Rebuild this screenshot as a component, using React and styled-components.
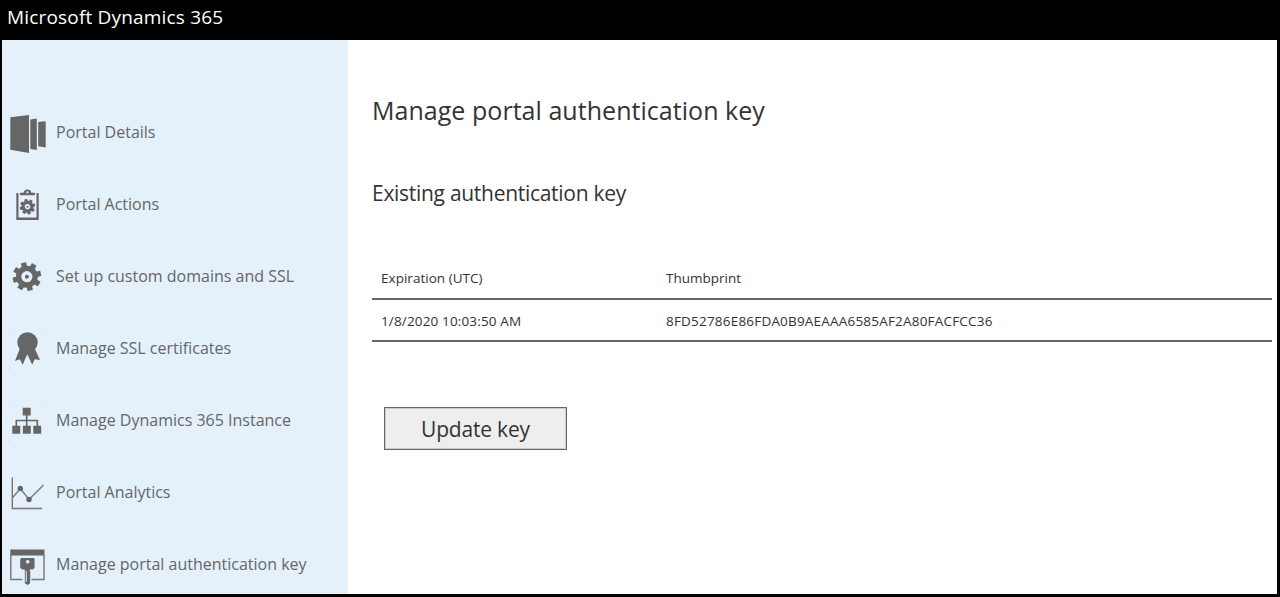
import React from "react";
import styled, { createGlobalStyle } from "styled-components";

const GlobalStyle = createGlobalStyle`
  *, *::before, *::after { box-sizing: border-box; }
  body {
    margin: 0;
    background: #fff;
    font-family: "Segoe UI", "Open Sans", "Noto Sans", sans-serif;
  }
`;

const Frame = styled.div`
  display: flex;
  flex-direction: column;
  height: 597px;
  overflow: hidden;
  background: #fff;
  border: solid #000;
  border-width: 0 3px 3px 2px;
`;

const TopBar = styled.header`
  flex: none;
  height: 40px;
  padding-left: 5px;
  background: #000;
  color: #fff;
  font-size: 19px;
  line-height: 35px;
  white-space: nowrap;
  letter-spacing: 0.18px;
`;

const Body = styled.div`
  display: flex;
  flex: 1;
  min-height: 0;
`;

const Sidebar = styled.nav`
  flex: none;
  width: 346px;
  padding-top: 56px;
  background: #e4f1fb;
  overflow: hidden;
`;

const NavItem = styled.a`
  display: flex;
  align-items: center;
  height: 72px;
  padding-left: 5px;
  color: #666;
  font-size: 16px;
  white-space: nowrap;
`;

const NavIcon = styled.svg`
  flex: none;
  width: 40px;
  height: 48px;
  margin-right: 9px;
  fill: #666;
`;

const Main = styled.main`
  flex: 1;
  padding: 49px 5px 0 24px;
  color: #333;
`;

const Title = styled.h1`
  margin: 0;
  font-size: 25px;
  font-weight: 400;
  line-height: 42px;
  letter-spacing: 0.04px;
`;

const Subtitle = styled.h2`
  margin: 42px 0 0;
  font-size: 21px;
  font-weight: 400;
  line-height: 40px;
  letter-spacing: -0.29px;
`;

const Table = styled.div`
  margin-top: 43px;
  font-size: 13.5px;
`;

const Row = styled.div`
  display: grid;
  grid-template-columns: 285px 1fr;
  align-items: center;
  height: ${(p) => p.$height}px;
  padding-top: 2px;
  border-bottom: 2px solid #666;
`;

const Cell = styled.span`
  padding-left: 9px;
  letter-spacing: ${(p) => p.$track || 0}px;
`;

const UpdateButton = styled.button`
  display: block;
  width: 183px;
  height: 43px;
  margin: 65px 0 0 12px;
  padding: 1px 0 0;
  border: 1px solid #666;
  background: #eee;
  box-shadow: inset 0 0 0 1px #ccc;
  color: #333;
  font-family: inherit;
  font-size: 21px;
  letter-spacing: -0.2px;
`;

const Gear = ({ cx, cy, outer, body, hole, tooth, dot, turn = 0 }) => (
  <g transform={`rotate(${turn} ${cx} ${cy})`}>
    {[0, 45, 90, 135, 180, 225, 270, 315].map((a) => (
      <rect
        key={a}
        x={cx - tooth / 2}
        y={cy - outer}
        width={tooth}
        height={outer - body + 1.5}
        rx="0.5"
        transform={`rotate(${a} ${cx} ${cy})`}
      />
    ))}
    <circle cx={cx} cy={cy} r={(body + hole) / 2} fill="none" stroke="#666" strokeWidth={body - hole} />
    {dot && <circle cx={cx} cy={cy} r={dot} />}
  </g>
);

const Corners = () => (
  <path d="M8 9h1v1H8zM46 9h1v1h-1zM8 47h1v1H8zM46 47h1v1h-1z" fill="#ccd6df" />
);

const icons = {
  details: <path d="M10.300 12.200 29 10v38l-18.700-3.200zM30.300 14.400l6.500-1v31.700l-6.500-1zM38.200 17l7.500-.7v26.200l-7.500-1.300z" />,
  actions: (
    <>
      <path d="M16.300 16h2.200v24.500h18V16h2.200v27H16.300z" />
      <path d="M20 15.700h3.600c.3-1.700 1.400-3.200 3.900-3.200s3.600 1.500 3.900 3.200H35v2.600H20z" />
      <circle cx="27.500" cy="15.300" r="1.100" fill="#e4f1fb" />
      <Gear cx={27.500} cy={29.700} outer={7.700} body={6} hole={2.700} tooth={3.200} dot={1} turn={-14} />
    </>
  ),
  settings: <Gear cx={26.900} cy={27.700} outer={14.300} body={11} hole={5.600} tooth={5.400} dot={2} turn={-14} />,
  certificate: (
    <>
      <Corners />
      <circle cx="27.500" cy="21.500" r="10.200" />
      <path d="M20 27 15 40l4.700-1.800 3 5.600 4.500-10.500 5 10.500 2.500-5.600 5.300.8L34.500 27z" />
    </>
  ),
  instance: (
    <>
      <Corners />
      <path d="M22.700 14.700h8v7.700h-8zM12.300 32.700h7.900v8h-7.900zM22.900 32.700h7.900v8h-7.900zM33.300 32.700h7.900v8h-7.900z" />
      <path d="M26.700 22v11M16.300 33v-5.500h21V33" fill="none" stroke="#666" strokeWidth="1.600" />
    </>
  ),
  analytics: (
    <>
      <path d="M12.300 12.500v31h30M12.300 33l8-9.500 8.700 11 14.500-14.500" fill="none" stroke="#777" strokeWidth="1.400" />
      <circle cx="20.300" cy="23.500" r="2.700" />
      <circle cx="29" cy="34.500" r="2.700" />
    </>
  ),
  key: (
    <>
      <path d="M10.300 12.500h34.200v6H10.300z" />
      <path d="M22.500 42.500H10.800V18M44 18v24.500H31.500" fill="none" stroke="#777" strokeWidth="1.400" />
      <path d="M21.500 21h12.300l.8 1v9l-2 1.600h-2.800v2l.9 1-.9 1 .9 1.200-.9 1.200.9 1.200-.9 1.200.5 1-.5 4-2 1.600-3-1.800V32.600h-2.600l-2-1.600v-9z" />
      <circle cx="27.700" cy="24.700" r="1.800" fill="#e4f1fb" />
      <path d="M26.200 34v11" stroke="#e4f1fb" strokeWidth="1" />
    </>
  ),
};

const items = [
  { icon: "details", label: "Portal Details" },
  { icon: "actions", label: "Portal Actions" },
  { icon: "settings", label: "Set up custom domains and SSL" },
  { icon: "certificate", label: "Manage SSL certificates" },
  { icon: "instance", label: "Manage Dynamics 365 Instance" },
  { icon: "analytics", label: "Portal Analytics" },
  { icon: "key", label: "Manage portal authentication key" },
];

export default function App() {
  return (
    <>
      <GlobalStyle />
      <Frame>
        <TopBar>Microsoft Dynamics 365</TopBar>
        <Body>
          <Sidebar>
            {items.map(({ icon, label }) => (
              <NavItem key={icon}>
                <NavIcon viewBox="7 3 40 48">{icons[icon]}</NavIcon>
                <span>{label}</span>
              </NavItem>
            ))}
          </Sidebar>
          <Main>
            <Title>Manage portal authentication key</Title>
            <Subtitle>Existing authentication key</Subtitle>
            <Table>
              <Row $height={44}>
                <Cell $track={0.03}>Expiration (UTC)</Cell>
                <Cell>Thumbprint</Cell>
              </Row>
              <Row $height={42}>
                <Cell $track={0.15}>1/8/2020 10:03:50 AM</Cell>
                <Cell $track={0.2}>8FD52786E86FDA0B9AEAAA6585AF2A80FACFCC36</Cell>
              </Row>
            </Table>
            <UpdateButton>Update key</UpdateButton>
          </Main>
        </Body>
      </Frame>
    </>
  );
}
